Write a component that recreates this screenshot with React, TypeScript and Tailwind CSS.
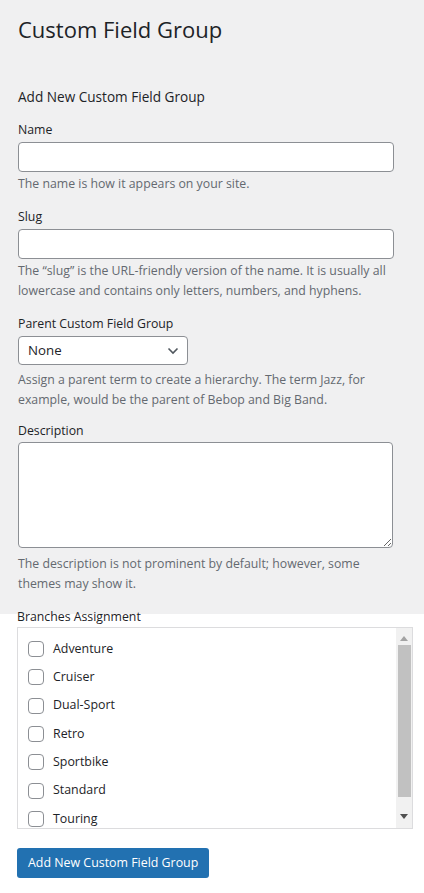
import { useState } from 'react'

const branches = [
  'Adventure',
  'Cruiser',
  'Dual-Sport',
  'Retro',
  'Sportbike',
  'Standard',
  'Touring',
]

function HelpText({ className = '', children }: { className?: string; children: React.ReactNode }) {
  return (
    <p className={`text-[12.3px] leading-[20px] text-[#646970] ${className}`}>{children}</p>
  )
}

function FieldLabel({ className = '', children }: { className?: string; children: React.ReactNode }) {
  return (
    <label className={`block text-[12.3px] leading-[20px] text-[#1d2327] ${className}`}>
      {children}
    </label>
  )
}

export default function App() {
  const [checked, setChecked] = useState<Record<string, boolean>>({})

  return (
    <div
      className="min-h-screen bg-white text-[#1d2327]"
      style={{ fontFamily: '"Open Sans", "Noto Sans", sans-serif' }}
    >
      <div className="bg-[#f0f0f1] px-[18px] pb-[20px] pt-[14px]">
        <h1 className="text-[22px] leading-[30px] font-normal">Custom Field Group</h1>

        <div className="w-[376px]">
          <h2 className="mt-[43px] text-[13.6px] leading-[20px]">Add New Custom Field Group</h2>

          <div className="mt-[13px]">
            <FieldLabel>Name</FieldLabel>
            <input
              type="text"
              className="mt-[2px] block h-[30px] w-full rounded-[4px] border border-[#8c8f94] bg-white px-2 text-[14px] outline-none"
            />
            <HelpText className="mt-[2px]">The name is how it appears on your site.</HelpText>
          </div>

          <div className="mt-[13px]">
            <FieldLabel>Slug</FieldLabel>
            <input
              type="text"
              className="mt-[2px] block h-[30px] w-full rounded-[4px] border border-[#8c8f94] bg-white px-2 text-[14px] outline-none"
            />
            <HelpText className="mt-[2px]">
              The “slug” is the URL-friendly version of the name. It is usually all lowercase and
              contains only letters, numbers, and hyphens.
            </HelpText>
          </div>

          <div className="mt-[13px]">
            <FieldLabel>Parent Custom Field Group</FieldLabel>
            <div className="relative mt-[2px] flex h-[29px] w-[170px] items-center rounded-[4px] border border-[#8c8f94] bg-white pl-[9px] text-[13.3px]">
              None
              <svg
                className="absolute right-[8px] top-[10px]"
                width="12"
                height="8"
                viewBox="0 0 12 8"
                fill="none"
              >
                <path d="M1.5 1.5 6 6l4.5-4.5" stroke="#50575e" strokeWidth="1.6" />
              </svg>
            </div>
            <HelpText className="mt-[5px]">
              Assign a parent term to create a hierarchy. The term Jazz, for example, would be the
              parent of Bebop and Big Band.
            </HelpText>
          </div>

          <div className="mt-[11px]">
            <FieldLabel>Description</FieldLabel>
            <textarea className="mt-[1px] block h-[106px] w-[375px] rounded-[4px] border border-[#8c8f94] bg-white px-2 text-[14px] outline-none" />
            <HelpText className="mt-[6px]">
              The description is not prominent by default; however, some themes may show it.
            </HelpText>
          </div>
        </div>
      </div>

      <div className="px-[17px]">
        <FieldLabel className="-mt-[7px]">Branches Assignment</FieldLabel>
        <div className="flex h-[202px] w-[396px] overflow-hidden border border-[#dcdcde] bg-white">
          <ul className="flex-1 pl-[10px] pt-[7px]">
            {branches.map((b) => (
              <li key={b} className="flex h-[28.3px] items-center gap-[9px] text-[12.4px]">
                <input
                  type="checkbox"
                  checked={!!checked[b]}
                  onChange={() => setChecked({ ...checked, [b]: !checked[b] })}
                  className="h-4 w-4 shrink-0 appearance-none rounded-[4px] border border-[#8c8f94] bg-white"
                />
                <span>{b}</span>
              </li>
            ))}
          </ul>
          <div className="flex w-[16px] flex-col items-center bg-[#f1f1f1] pb-[2px] pt-[8px]">
            <svg width="8" height="5" viewBox="0 0 8 5">
              <path d="M0 5 4 0l4 5z" fill="#a3a3a3" />
            </svg>
            <div className="mt-[4px] h-[152px] w-[13px] bg-[#c1c1c1]" />
            <div className="flex-1" />
            <svg className="mb-[7px]" width="8" height="5" viewBox="0 0 8 5">
              <path d="M0 0h8L4 5z" fill="#505050" />
            </svg>
          </div>
        </div>

        <button className="mt-[19px] h-[30px] rounded-[3px] bg-[#2271b1] px-[11px] text-[12.4px] text-white">
          Add New Custom Field Group
        </button>
      </div>
    </div>
  )
}
